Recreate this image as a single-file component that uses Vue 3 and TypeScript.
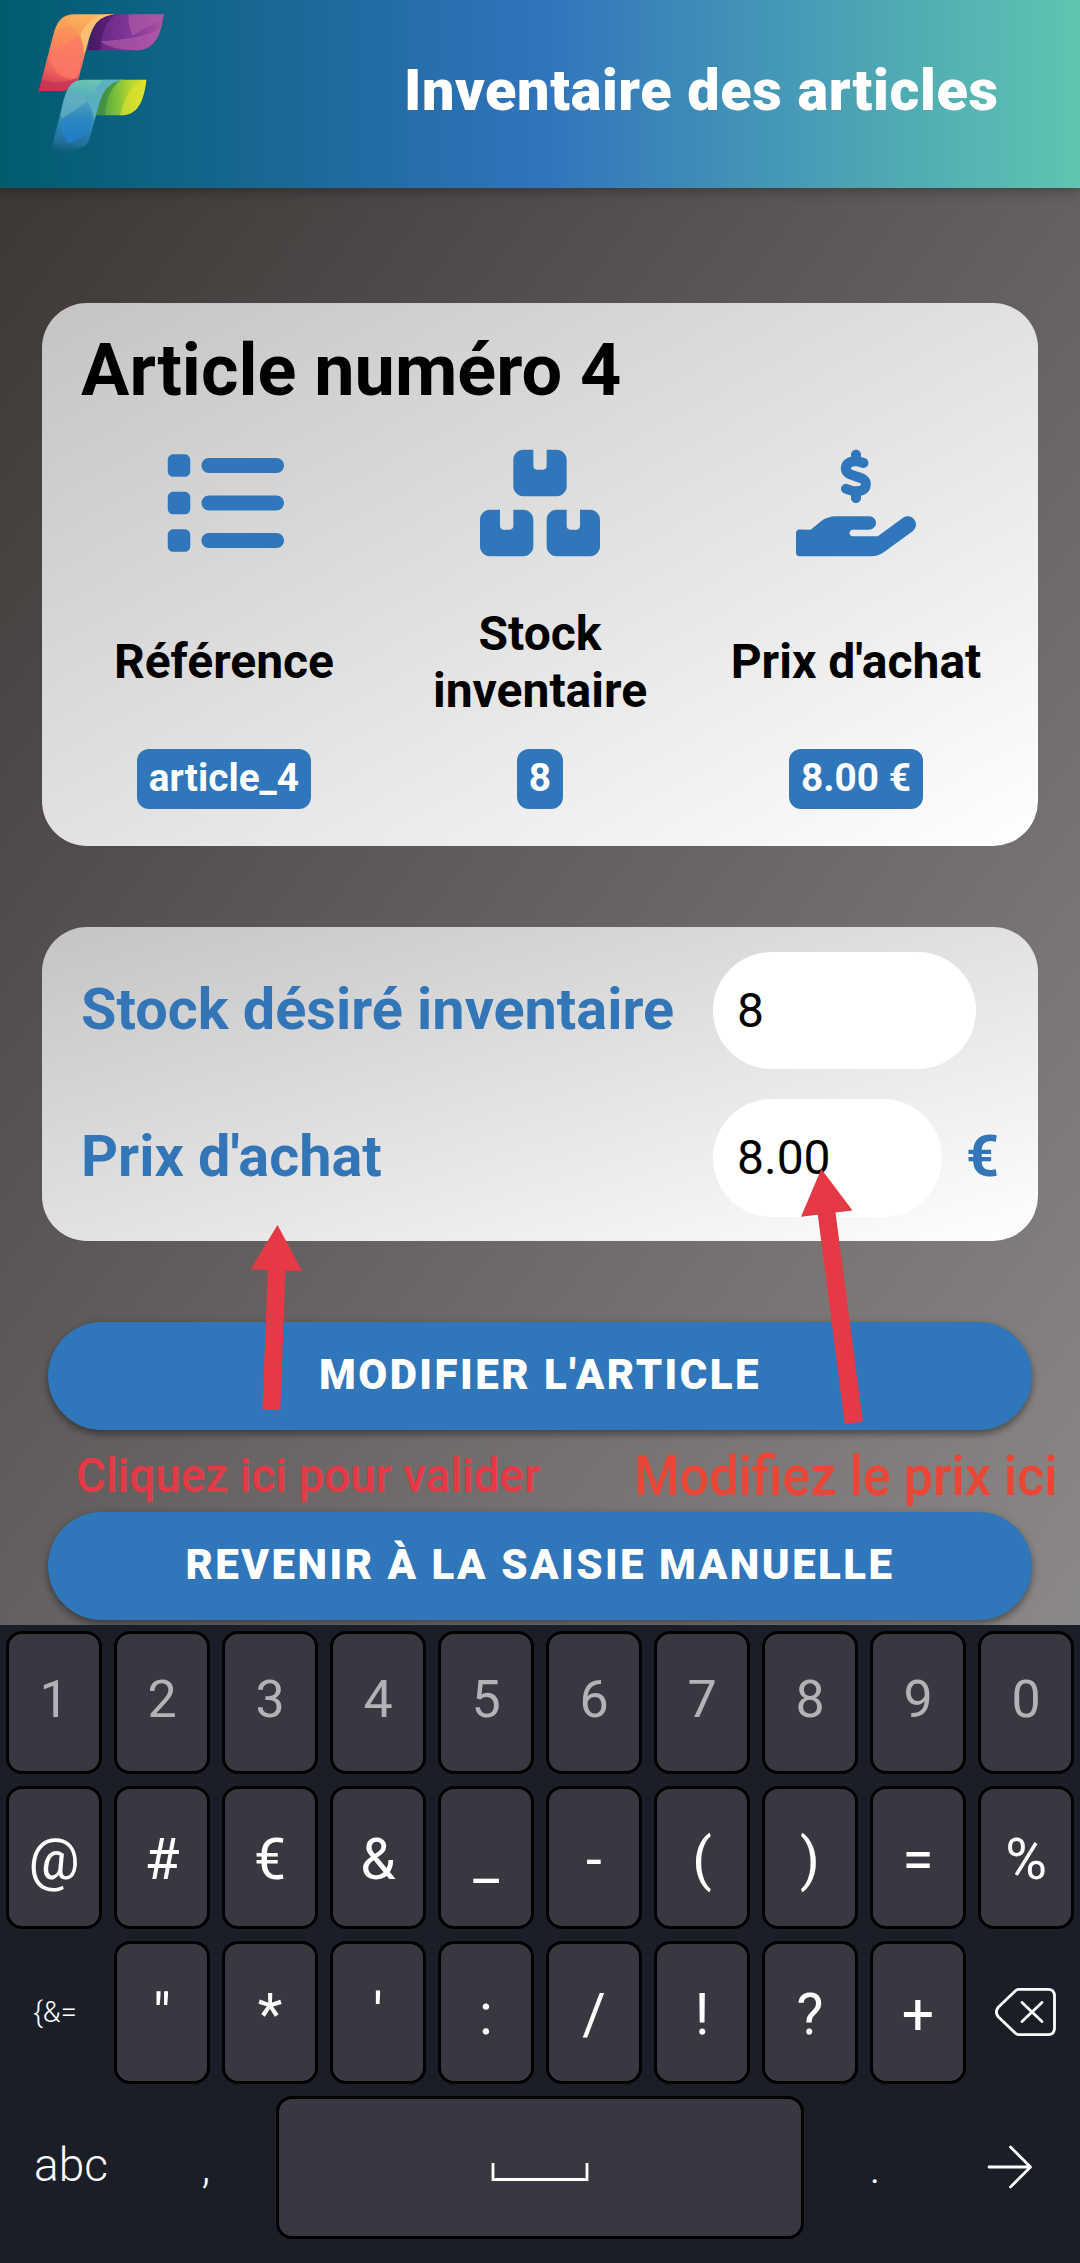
<script setup lang="ts">
interface Column {
  label: string
  value: string
  viewBox: string
  paths: string[]
}

const columns: Column[] = [
  {
    label: 'Référence',
    value: 'article_4',
    viewBox: '0 0 512 512',
    paths: [
      'M88 48C101.3 48 112 58.75 112 72V120C112 133.3 101.3 144 88 144H40C26.75 144 16 133.3 16 120V72C16 58.75 26.75 48 40 48H88zM480 64C497.7 64 512 78.33 512 96C512 113.7 497.7 128 480 128H192C174.3 128 160 113.7 160 96C160 78.33 174.3 64 192 64H480z',
      'M88 208C101.3 208 112 218.75 112 232V280C112 293.3 101.3 304 88 304H40C26.75 304 16 293.3 16 280V232C16 218.75 26.75 208 40 208H88zM480 224C497.7 224 512 238.33 512 256C512 273.7 497.7 288 480 288H192C174.3 288 160 273.7 160 256C160 238.33 174.3 224 192 224H480z',
      'M88 368C101.3 368 112 378.75 112 392V440C112 453.3 101.3 464 88 464H40C26.75 464 16 453.3 16 440V392C16 378.75 26.75 368 40 368H88zM480 384C497.7 384 512 398.33 512 416C512 433.7 497.7 448 480 448H192C174.3 448 160 433.7 160 416C160 398.33 174.3 384 192 384H480z',
    ],
  },
  {
    label: 'Stock inventaire',
    value: '8',
    viewBox: '0 0 576 512',
    paths: [
      'M160 48C160 21.49 181.5 0 208 0H256V80C256 88.84 263.2 96 272 96H304C312.8 96 320 88.84 320 80V0H368C394.5 0 416 21.49 416 48V176C416 202.5 394.5 224 368 224H208C181.5 224 160 202.5 160 176V48z',
      'M96 288V368C96 376.8 103.2 384 112 384H144C152.8 384 160 376.8 160 368V288H208C234.5 288 256 309.5 256 336V464C256 490.5 234.5 512 208 512H48C21.49 512 0 490.5 0 464V336C0 309.5 21.49 288 48 288H96z',
      'M416 288V368C416 376.8 423.2 384 432 384H464C472.8 384 480 376.8 480 368V288H528C554.5 288 576 309.5 576 336V464C576 490.5 554.5 512 528 512H368C341.5 512 320 490.5 320 464V336C320 309.5 341.5 288 368 288H416z',
    ],
  },
  {
    label: "Prix d'achat",
    value: '8.00 €',
    viewBox: '0 0 576 512',
    paths: [
      'M568.2 336.3c-13.12-17.81-38.14-21.66-55.93-8.469l-119.7 88.17h-120.6c-8.748 0-15.1-7.25-15.1-15.99c0-8.75 7.25-16 15.1-16h78.25c15.1 0 30.75-10.88 33.37-26.62c3.25-20-12.12-37.38-31.62-37.38H191.1c-26.1 0-53.12 9.25-74.12 26.25l-46.5 37.74L15.1 383.1C7.251 383.1 0 391.3 0 400v95.98C0 504.8 7.251 512 15.1 512h346.1c22.03 0 43.92-7.188 61.7-20.27l135.1-99.52C577.5 379.1 581.3 354.1 568.2 336.3z',
      'M279.3 175C271.7 173.9 261.7 170.3 252.9 167.1L248 165.4C235.5 160.1 221.8 167.5 217.4 179.1s2.121 26.2 14.59 30.64l4.655 1.656c8.486 3.061 17.88 6.095 27.39 8.312V232c0 13.25 10.73 24 23.98 24s24-10.75 24-24V221.6c25.27-5.723 42.88-21.85 46.1-45.72c8.688-50.05-38.89-63.66-64.42-70.95L288.4 103.1C262.1 95.64 263.6 92.42 264.3 88.31c1.156-6.766 15.3-10.06 32.21-7.391c4.938 .7813 11.37 2.547 19.65 5.422c12.53 4.281 26.21-2.312 30.52-14.84s-2.309-26.19-14.84-30.53c-7.602-2.627-13.92-4.358-19.82-5.721V24c0-13.25-10.75-24-24-24s-23.98 10.75-23.98 24v10.52C238.8 40.23 221.1 56.25 216.1 80.13C208.4 129.6 256.7 143.8 274.9 149.2l6.498 1.875c31.66 9.062 31.15 11.89 30.34 16.64C310.6 174.5 296.5 177.8 279.3 175z',
    ],
  },
]

const digits: string[] = ['1', '2', '3', '4', '5', '6', '7', '8', '9', '0']
const symbols: string[] = ['@', '#', '€', '&', '_', '-', '(', ')', '=', '%']
const punctuation: string[] = ['"', '*', "'", ':', '/', '!', '?', '+']
</script>

<template>
  <div class="screen">
    <header class="bar">
      <svg class="logo" viewBox="110 36 386 436" aria-hidden="true">
        <defs>
          <linearGradient id="orange" x1="0.6" y1="0" x2="0.3" y2="1">
            <stop offset="0" stop-color="#fdb35a" />
            <stop offset="0.45" stop-color="#f98a5b" />
            <stop offset="0.8" stop-color="#ee5f5c" />
            <stop offset="1" stop-color="#cc3a56" />
          </linearGradient>
          <linearGradient id="petal" x1="0.5" y1="0" x2="0.4" y2="1">
            <stop offset="0" stop-color="#fb9659" />
            <stop offset="1" stop-color="#fa6b5f" />
          </linearGradient>
          <linearGradient id="purple" x1="0" y1="0" x2="1" y2="0">
            <stop offset="0" stop-color="#3d1457" />
            <stop offset="0.2" stop-color="#6a2a88" />
            <stop offset="0.6" stop-color="#83379b" />
            <stop offset="1" stop-color="#a9549f" />
          </linearGradient>
          <linearGradient id="blue" x1="0.6" y1="0" x2="0.45" y2="1">
            <stop offset="0" stop-color="#6cc5b6" />
            <stop offset="0.35" stop-color="#4fa5b8" />
            <stop offset="0.65" stop-color="#2b83b8" />
            <stop offset="0.86" stop-color="#216f9c" />
            <stop offset="1" stop-color="#1a6378" stop-opacity="0.1" />
          </linearGradient>
          <linearGradient id="drop" x1="0.5" y1="0" x2="0.5" y2="1">
            <stop offset="0" stop-color="#4ea0bd" />
            <stop offset="0.4" stop-color="#2e87c0" />
            <stop offset="1" stop-color="#1e7cc8" />
          </linearGradient>
          <linearGradient id="green" x1="0" y1="0" x2="1" y2="0">
            <stop offset="0" stop-color="#3f9440" />
            <stop offset="0.4" stop-color="#7dc13c" />
            <stop offset="0.7" stop-color="#b9d531" />
            <stop offset="1" stop-color="#e6e52c" />
          </linearGradient>
        </defs>
        <path d="M262 151C270 95 290 44 345 43H490C482 105 462 151 408 151Z" fill="url(#purple)" />
        <path d="M300 150C304 95 320 55 350 43H325C290 50 268 95 262 151Z" fill="#4b1a68" opacity="0.7" />
        <path d="M385 43H490L486 66C460 68 420 90 398 108C388 90 382 65 385 43Z" fill="#b05ba6" opacity="0.65" />
        <path d="M486 66C480 90 455 112 300 124C320 140 350 150 408 151C455 151 478 115 486 66Z" fill="#b45aa8" opacity="0.65" />
        <path d="M115 273L160 100C170 65 185 44 220 43H345C290 48 275 80 262 130L240 215C232 255 215 273 175 273Z" fill="url(#orange)" />
        <path d="M240 105C255 75 275 48 320 43H345C290 48 275 80 262 130L252 162C250 140 246 122 240 105Z" fill="#fec476" opacity="0.8" />
        <path d="M161 110C175 75 205 70 232 95C256 130 254 185 225 235C190 240 150 215 150 175Z" fill="url(#petal)" />
        <path d="M172 150L232 108C262 150 245 210 222 236C195 228 160 205 150 180Z" fill="#fa7767" opacity="0.7" />
        <path d="M124 240C160 250 195 248 232 233C222 262 205 273 175 273H115Z" fill="#c63455" opacity="0.75" />
        <path d="M288 346C296 290 312 240 365 239H438C430 305 412 346 360 346Z" fill="url(#green)" />
        <path d="M314 345C316 295 335 255 365 239H350C315 245 292 295 288 346Z" fill="#3c8d43" opacity="0.75" />
        <path d="M438 239C430 305 412 346 360 346C370 300 385 255 438 239Z" fill="#dfe22b" opacity="0.6" />
        <path d="M148 468L190 300C200 262 212 240 250 239H372C325 243 305 275 294 320L268 415C262 435 250 442 235 446C210 455 180 462 148 468Z" fill="url(#blue)" />
        <path d="M260 303C280 280 295 248 310 239H372C325 243 305 275 294 320L282 360C278 335 270 318 260 303Z" fill="#5aafc2" opacity="0.9" />
        <path d="M190 300C205 272 240 268 260 303L186 356L180 345Z" fill="#63aec4" opacity="0.75" />
        <path d="M186 356L262 305C285 345 280 380 250 408L206 430C188 410 178 385 186 356Z" fill="url(#drop)" />
      </svg>
      <h1 class="bar-title">Inventaire des articles</h1>
    </header>

    <main class="content">
      <section class="card article">
        <h2 class="article-title">Article numéro 4</h2>
        <div class="columns">
          <div v-for="col in columns" :key="col.label" class="column">
            <svg class="column-icon" :viewBox="col.viewBox" aria-hidden="true">
              <path v-for="(d, i) in col.paths" :key="i" :d="d" />
            </svg>
            <div class="column-label">{{ col.label }}</div>
            <span class="badge">{{ col.value }}</span>
          </div>
        </div>
      </section>

      <section class="card form">
        <div class="field">
          <span class="field-label">Stock désiré inventaire</span>
          <div class="input wide">8</div>
        </div>
        <div class="field">
          <span class="field-label">Prix d'achat</span>
          <div class="input">8.00</div>
          <span class="field-label unit">€</span>
        </div>
      </section>

      <button class="btn" type="button">MODIFIER L'ARTICLE</button>
      <button class="btn second" type="button">REVENIR À LA SAISIE MANUELLE</button>
    </main>

    <section class="keyboard">
      <div class="keys">
        <div v-for="k in digits" :key="k" class="key digit">{{ k }}</div>
      </div>
      <div class="keys">
        <div v-for="k in symbols" :key="k" class="key symbol">{{ k }}</div>
      </div>
      <div class="keys">
        <div class="plain more">{&amp;=</div>
        <div v-for="k in punctuation" :key="k" class="key symbol">{{ k }}</div>
        <div class="plain">
          <svg class="backspace" viewBox="0 0 62 50" aria-hidden="true">
            <path d="M24 2.3H53Q59.5 2.3 59.5 9V41Q59.5 47.7 53 47.7H24Q22 47.7 20.5 46.3L3.5 30Q-0.8 25 3.5 20L20.5 3.7Q22 2.3 24 2.3Z" />
            <path d="M27 15.5L47 34.5M47 15.5L27 34.5" />
          </svg>
        </div>
      </div>
      <div class="keys last">
        <div class="plain abc">abc</div>
        <div class="plain comma">,</div>
        <div class="key space">
          <svg class="space-mark" viewBox="0 0 98 20" aria-hidden="true">
            <path d="M2 1V17.5H96V1" />
          </svg>
        </div>
        <div class="plain dot">.</div>
        <div class="plain next">
          <svg class="arrow" viewBox="0 0 46 44" aria-hidden="true">
            <path d="M2 22H43M23.5 2L43.5 22L23.5 42" />
          </svg>
        </div>
      </div>
    </section>

    <svg class="annotations" viewBox="0 0 1080 2263" aria-hidden="true">
      <path d="M277.5 1225L302.3 1271.3L285.5 1270.6L280.3 1410L262.4 1409.3L267.9 1269.9L250.7 1269.2Z" />
      <path d="M821.3 1169L852.5 1210.5L835.5 1212.5L862.8 1421.5L844.8 1424.3L817.8 1214.7L801 1216.7Z" />
    </svg>
    <span class="note validate">Cliquez ici pour valider</span>
    <span class="note price">Modifiez le prix ici</span>
  </div>
</template>

<style>
body {
  margin: 0;
}
</style>

<style scoped>
.screen {
  position: relative;
  display: flex;
  flex-direction: column;
  width: 1080px;
  height: 2263px;
  overflow: hidden;
  font-family: Roboto, "Liberation Sans", sans-serif;
  background: #1c1e27;
}

.screen * {
  box-sizing: border-box;
}

.bar {
  z-index: 1;
  display: flex;
  flex: none;
  align-items: flex-start;
  justify-content: space-between;
  height: 188px;
  padding: 12px 81.4px 0 36.7px;
  background: linear-gradient(90deg, #015b6d 0%, #3074bc 50%, #60c5af 100%);
  box-shadow: 0 3px 12px rgba(0, 0, 0, 0.3);
}

.logo {
  width: 128.7px;
  height: 145.3px;
}

.bar-title {
  margin: 45px 0 0;
  color: #fff;
  font-size: 57.6px;
  font-weight: 900;
  line-height: 68px;
  letter-spacing: 0.63px;
  white-space: nowrap;
}

.content {
  display: flex;
  flex: none;
  flex-direction: column;
  height: 1437px;
  padding: 115px 42px 0;
  overflow: hidden;
  background: linear-gradient(to bottom right, #3d3736 0%, #646060 50%, #8b8987 100%);
}

.card {
  flex: none;
  border-radius: 45px;
  background: linear-gradient(to bottom right, #c4c4c4, #fff);
}

.article {
  height: 543px;
  padding: 25px 24px 0;
}

.article-title {
  margin: 0 0 28.4px;
  padding-left: 15px;
  color: #000;
  font-size: 72px;
  font-weight: 700;
  line-height: 86.4px;
}

.columns {
  display: grid;
  grid-template-columns: repeat(3, 1fr);
}

.column {
  display: flex;
  flex-direction: column;
  align-items: center;
}

.column-icon {
  width: 120px;
  height: 120px;
  fill: #2f76ba;
}

.column-label {
  display: flex;
  align-items: center;
  height: 115px;
  margin-top: 41.5px;
  padding: 0 24px;
  color: #000;
  font-size: 48px;
  font-weight: 700;
  line-height: 57.2px;
  text-align: center;
}

.badge {
  height: 60px;
  margin-top: 29.5px;
  padding: 0 12px;
  border-radius: 12px;
  background: #2f76ba;
  color: #fff;
  font-size: 38.8px;
  font-weight: 700;
  line-height: 57px;
  white-space: nowrap;
}

.form {
  display: flex;
  flex-direction: column;
  gap: 30px;
  height: 314px;
  margin-top: 81px;
  padding: 24.5px 24px 0 39px;
}

.field {
  display: flex;
  align-items: center;
  height: 117.5px;
}

.field-label {
  width: 632px;
  padding-bottom: 1px;
  color: #3276b8;
  font-size: 57.6px;
  font-weight: 700;
  line-height: 68px;
  white-space: nowrap;
}

.unit {
  width: auto;
  margin-left: 24px;
}

.input {
  width: 229px;
  height: 117.5px;
  padding-left: 24px;
  border-radius: 59px;
  background: #fff;
  color: #000;
  font-size: 48px;
  line-height: 117.5px;
}

.wide {
  width: 262.5px;
}

.btn {
  flex: none;
  height: 108px;
  margin: 81px 6px 0;
  padding: 0 0 2px;
  border: 0;
  border-radius: 54px;
  background: #2f76ba;
  box-shadow: 0 5px 6px rgba(0, 0, 0, 0.28), 0 1px 8px rgba(0, 0, 0, 0.16);
  color: #fff;
  font: 900 42px/106px Roboto, "Liberation Sans", sans-serif;
  letter-spacing: 2.48px;
  white-space: nowrap;
}

.second {
  margin-top: 82px;
}

.keyboard {
  display: flex;
  flex: 1;
  flex-direction: column;
  gap: 12px;
  padding: 6px 6px 0;
  background: #1c1e27;
  color: #fff;
}

.keys {
  display: flex;
  gap: 12px;
  height: 143px;
}

.last {
  gap: 6px;
}

.key {
  width: 96px;
  height: 143px;
  border: 3px solid #000;
  border-radius: 16px;
  background: #393840;
  text-align: center;
}

.digit {
  color: #b3b2b7;
  font-size: 52px;
  line-height: 131px;
}

.symbol {
  font-size: 57px;
  line-height: 141px;
}

.plain {
  display: flex;
  align-items: center;
  justify-content: center;
  width: 96px;
  height: 143px;
  padding-bottom: 2px;
  font-weight: 300;
}

.more {
  padding-left: 2px;
  font-size: 29px;
}

.abc {
  width: 130px;
  padding-bottom: 5px;
  font-size: 46px;
}

.comma {
  width: 128px;
  padding-bottom: 3px;
  font-size: 46px;
}

.dot {
  width: 130px;
  font-size: 46px;
}

.next {
  width: 128px;
}

.space {
  display: flex;
  justify-content: center;
  width: 528px;
}

.space-mark {
  width: 98px;
  height: 20px;
  margin-top: 63px;
}

.arrow {
  width: 46px;
  height: 44px;
}

.backspace {
  width: 62px;
  height: 50px;
}

.keyboard svg {
  fill: none;
  stroke: #fff;
  stroke-width: 2.8;
  stroke-linecap: round;
  stroke-linejoin: round;
}

.keyboard .space-mark {
  stroke-linecap: butt;
  stroke-linejoin: miter;
}

.annotations {
  position: absolute;
  z-index: 2;
  top: 0;
  left: 0;
  width: 1080px;
  height: 2263px;
  fill: #e53a45;
  pointer-events: none;
}

.note {
  position: absolute;
  z-index: 2;
  font-weight: 500;
  white-space: nowrap;
  transform-origin: left center;
}

.validate {
  top: 1448px;
  left: 75.5px;
  color: #e53a45;
  font-size: 48px;
  line-height: 56px;
  transform: scaleX(0.955);
}

.price {
  top: 1444px;
  left: 634px;
  color: #ea4535;
  font-size: 55px;
  line-height: 64px;
  transform: scaleX(0.948);
}
</style>
